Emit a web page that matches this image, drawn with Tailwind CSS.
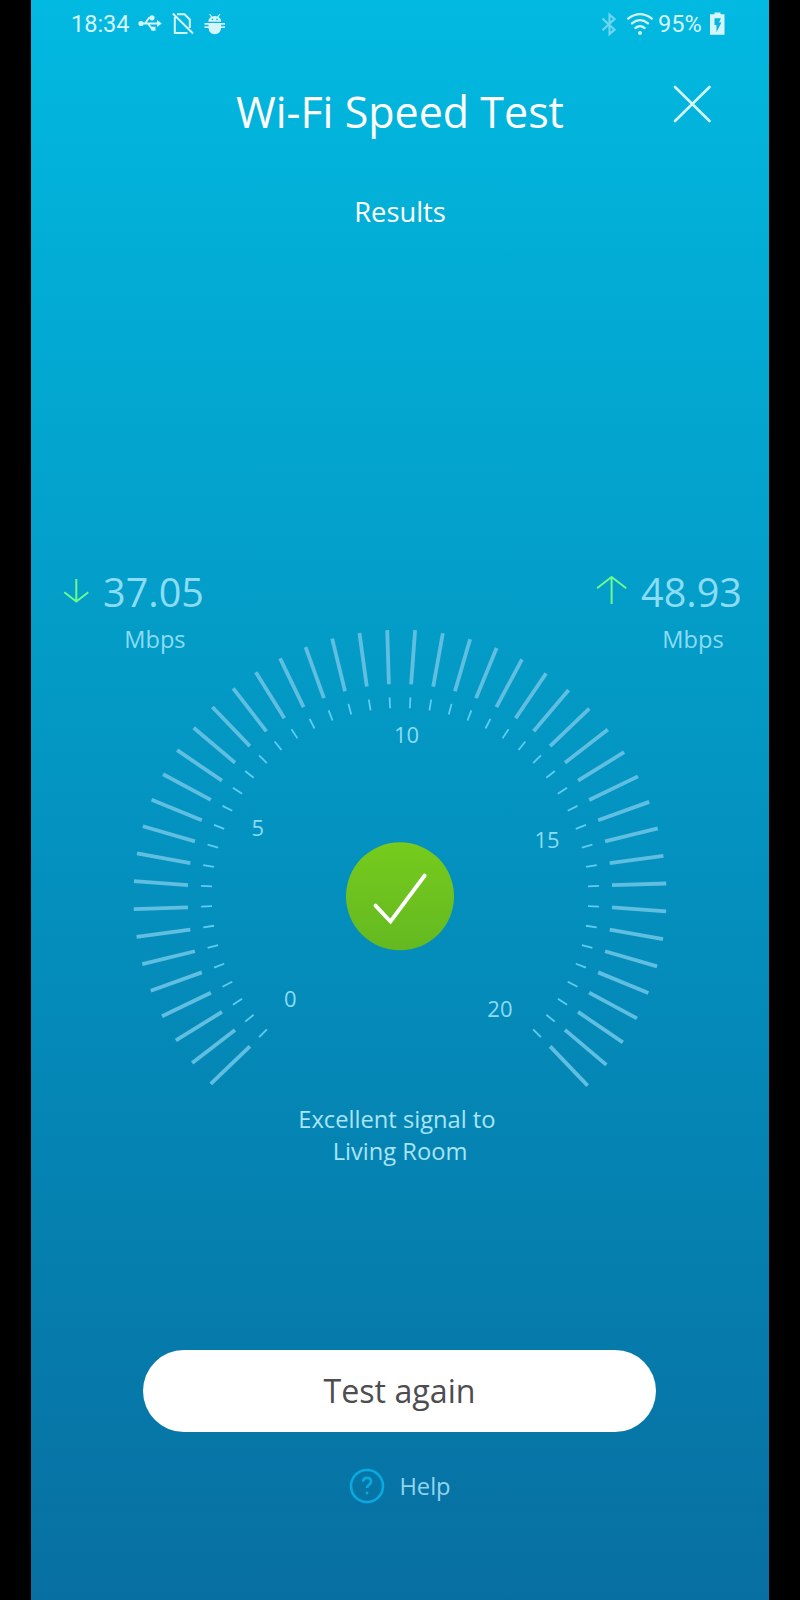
<!DOCTYPE html>
<html lang="en">

<head>
    <meta charset="UTF-8">
    <meta name="viewport" content="width=device-width, initial-scale=1.0">
    <title>Wi-Fi Speed Test</title>
    <script src="https://cdn.jsdelivr.net/npm/@tailwindcss/browser@4"></script>
</head>

<body class="bg-black">
    <div class="w-[738px] h-[1600px] mx-auto overflow-hidden flex flex-col font-['Open_Sans','Noto_Sans',sans-serif] text-white bg-[linear-gradient(180deg,#02b9e1_0%,#02add5_16%,#039dc8_38%,#0490be_55%,#057fae_78%,#086fa2_100%)]">
        <!-- Status bar -->
        <div class="h-12 shrink-0 pl-[40px] pr-[44px] flex items-center justify-between font-[Roboto,sans-serif] text-[23.5px] text-[#d5f5fc]">
            <div class="flex items-center">
                <span class="w-[59px] pt-px">18:34</span>
                <svg class="ml-[8px]" width="25" height="22" viewBox="138 12.500 25 22" fill="none" stroke="currentColor" stroke-width="1.900">
                    <path d="M141 23H159M145 23L149 17.5H151M148 23L152 28.5H154" />
                    <circle cx="141" cy="23" r="2.600" fill="currentColor" stroke="none" />
                    <circle cx="152" cy="17.3" r="2.600" fill="currentColor" stroke="none" />
                    <path d="M151.500 26.300h4v4h-4zM157 19.500l4.800 3.500-4.800 3.500z" fill="currentColor" stroke="none" />
                </svg>
                <svg class="ml-[8px]" width="24" height="24" viewBox="171 11 24 24" fill="none" stroke="currentColor" stroke-width="2">
                    <path d="M177 13.300H184.500L189.800 18.500V27M174.800 16V32H187.500M172.800 12.500L193 32.500" />
                </svg>
                <svg class="ml-[9px]" width="22" height="24" viewBox="204 11 22 24" fill="currentColor">
                    <path d="M208.500 20.800a6 5 0 0 1 2.600-4.700l-2-2.600.9-.7 2.200 2.700a6.500 6.500 0 0 1 5.100 0l2.200-2.700.9.7-2 2.600a6 5 0 0 1 2.600 4.700z" />
                    <path d="M204.500 22h20.500v1.800h-4v1.400h4v1.800h-4c-.2 3.800-2.500 6.200-6.200 6.200s-6-2.400-6.200-6.200H204.500v-1.800h4v-1.400h-4z" />
                    <g class="fill-[#04b7df]"><circle cx="212.500" cy="18.400" r=".8" /><circle cx="217" cy="18.400" r=".8" /></g>
                </svg>
            </div>
            <div class="flex items-center">
                <svg class="opacity-50" width="18" height="26" viewBox="600 9.500 18 26" fill="none" stroke="currentColor" stroke-width="2.200">
                    <path d="M602.500 17L614.500 28.200L609.500 32.500V13.200L614.500 17.500L602.500 28.700" />
                </svg>
                <svg class="ml-[8px]" width="28" height="26" viewBox="626 10 28 26" fill="none" stroke="currentColor" stroke-width="2.300" stroke-linecap="round">
                    <path d="M628.300 17.500Q640 8.800 651.700 17.500M632 22.300Q640 16 648 22.300M635.500 27Q640 23.300 644.500 27" />
                    <circle cx="640" cy="32" r="2" fill="currentColor" stroke="none" />
                </svg>
                <span class="ml-[4px] w-[43px] pt-px">95%</span>
                <svg class="ml-[9px]" width="15" height="24" viewBox="710 12 15 24" fill="currentColor" fill-rule="evenodd">
                    <path d="M714.500 12.500h6v1.700h4v20.500h-14.500V14.200h4.500zM714.500 18.200v6.800h2v7.300l4.900-9.800h-2.400l1.900-4.300z" />
                </svg>
            </div>
        </div>

        <!-- Header -->
        <div class="h-[93px] shrink-0 pt-[33px] grid grid-cols-[1fr_auto_1fr]">
            <h1 class="col-start-2 text-[43px] leading-[61px] whitespace-nowrap">Wi-Fi Speed Test</h1>
            <svg class="justify-self-end mr-[58px] mt-[4px]" width="38" height="38" viewBox="673 85 38 38" stroke="#d5f5fc" stroke-width="2.600" stroke-linecap="round">
                <path d="M675 87L709.500 121M709.500 87L675 121" />
            </svg>
        </div>
        <h2 class="mt-[51px] text-[27.3px] leading-10 text-center">Results</h2>

        <!-- Download / upload -->
        <div class="mt-[332px] pl-[32px] pr-[27px] flex justify-between text-[#8bdcf5]">
            <div class="flex">
                <svg class="mt-[13px]" width="27" height="28" viewBox="63 577 27 28" fill="none" stroke="#6dfa8f" stroke-width="2">
                    <path d="M76.300 579V601.500M64.300 592.300L76.300 601.500L88.300 592.300" />
                </svg>
                <div class="ml-[13px]">
                    <div class="text-[39.6px] leading-14">37.05</div>
                    <div class="mt-[3px] pl-[3px] text-[23.6px] leading-8 text-center">Mbps</div>
                </div>
            </div>
            <div class="flex">
                <svg class="mt-[11px]" width="32" height="30" viewBox="596 575 32 30" fill="none" stroke="#6dfa8f" stroke-width="2">
                    <path d="M611.600 604V577M597 588.200L611.600 577L626.200 588.200" />
                </svg>
                <div class="ml-[13px]">
                    <div class="text-[39.6px] leading-14">48.93</div>
                    <div class="mt-[3px] pl-[3px] text-[23.6px] leading-8 text-center">Mbps</div>
                </div>
            </div>
        </div>

        <!-- Gauge -->
        <svg class="-mt-[35px] mx-auto shrink-0" width="540" height="480" viewBox="-270 -276.300 540 480">
            <defs>
                <linearGradient id="ok" x1="0" y1="0" x2="0" y2="1">
                    <stop offset="0" stop-color="#76cb1d" />
                    <stop offset="1" stop-color="#64b921" />
                </linearGradient>
            </defs>
            <g id="ticks" stroke="#60bfe1" stroke-width="3.800"></g>
            <g id="dashes" stroke="#5fcdf3" stroke-width="1.800"></g>
            <g class="text-[22px]" fill="#8bdcf5">
                <text x="-116" y="111.200">0</text>
                <text x="-148.500" y="-60.700">5</text>
                <text x="-6" y="-153.600">10</text>
                <text x="134.500" y="-48">15</text>
                <text x="87.300" y="121">20</text>
            </g>
            <circle cx="0" cy="0" r="54" fill="url(#ok)" />
            <path d="M-24.500 9.300L-9.500 25.200L24.700 -20.800" fill="none" stroke="#fff" stroke-width="3.800" stroke-linecap="round" />
        </svg>

        <p class="mt-[3px] shrink-0 text-[23.7px] leading-8 text-center text-[#a9e4f7]">Excellent signal to&nbsp;<br>Living Room</p>

        <button class="mt-[183px] ml-[112px] pt-px shrink-0 w-[513px] h-[82px] rounded-full bg-white text-[32.2px] text-[#4d4d4f]">Test again</button>

        <div class="mt-[36px] h-9 shrink-0 flex items-center justify-center gap-[14px] text-[23.7px] text-[#92d3ee]">
            <svg width="36" height="36" viewBox="0 0 36 36" fill="none" stroke="#08aae0" stroke-width="2.600">
                <circle cx="18" cy="18" r="16" />
                <path d="M13.900 13.600c.4-2.500 2-3.700 4.100-3.700 2.400 0 4.100 1.300 4.100 3.500 0 3.300-4.100 3.200-4.100 6.600" />
                <circle cx="18" cy="25" r="1.400" fill="#08aae0" stroke="none" />
            </svg>
            <span class="pt-px">Help</span>
        </div>
    </div>

    <script>
        // Point on the dial, angle in degrees clockwise from the top
        function point(angle, radius) {
            const a = angle * Math.PI / 180;
            return [Math.sin(a) * radius, -Math.cos(a) * radius];
        }

        function addLine(group, from, to) {
            const line = document.createElementNS('http://www.w3.org/2000/svg', 'line');
            line.setAttribute('x1', from[0]);
            line.setAttribute('y1', from[1]);
            line.setAttribute('x2', to[0]);
            line.setAttribute('y2', to[1]);
            group.appendChild(line);
        }

        const ticks = document.getElementById('ticks');
        const dashes = document.getElementById('dashes');

        for (let angle = -135; angle <= 135; angle += 6) {
            addLine(ticks, point(angle, 212.3), point(angle + 0.25, 266.5));
            addLine(dashes, point(angle, 188.3), point(angle, 199.2));
        }
    </script>
</body>

</html>
